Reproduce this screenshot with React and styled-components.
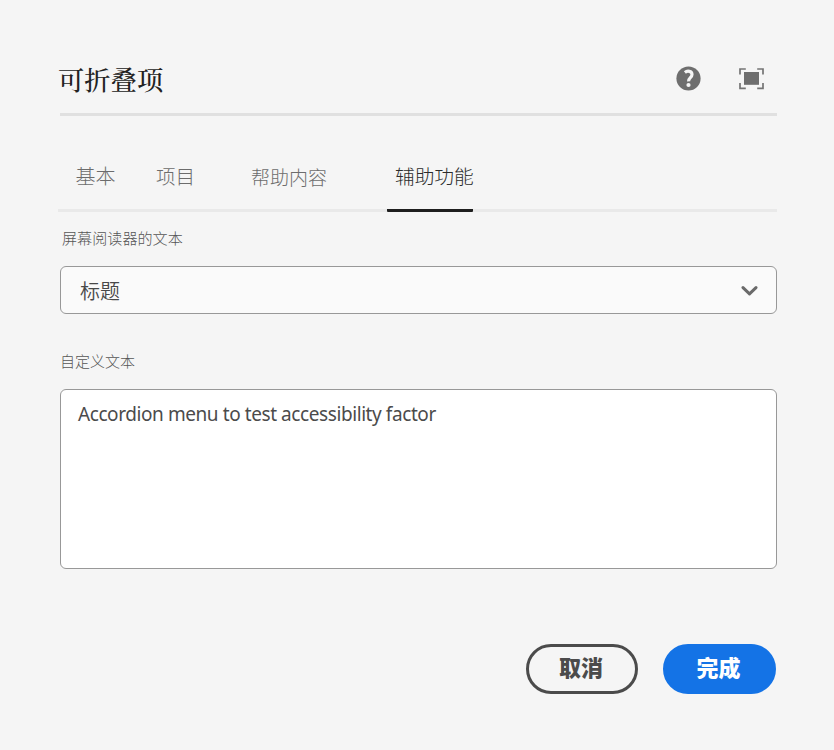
import React from 'react';
import styled, { createGlobalStyle } from 'styled-components';

const GlobalStyle = createGlobalStyle`
  * { box-sizing: border-box; }
  body {
    margin: 0;
    background: #f5f5f5;
    font-family: "Noto Sans CJK SC", sans-serif;
  }
`;

const Dialog = styled.main`
  width: 834px;
  height: 750px;
  padding: 50px 57px 0 60px;
  background: #f5f5f5;
  overflow: hidden;
`;

const Header = styled.header`
  display: flex;
  align-items: center;
  height: 66px;
  padding-right: 12px;
  padding-bottom: 6px;
  border-bottom: 3px solid #e0e0e0;
`;

const Title = styled.h1`
  flex: 1;
  margin: 0 0 0 -2px;
  font-family: "Noto Serif CJK SC", "Noto Sans CJK SC", serif;
  font-size: 26.3px;
  line-height: 40px;
  font-weight: 500;
  color: #222;
`;

const HeaderIcons = styled.div`
  display: flex;
  align-items: center;
  gap: 37px;
  svg { display: block; }
`;

const Tabs = styled.nav`
  display: flex;
  align-items: flex-end;
  height: 96px;
  margin-left: -2px;
  box-shadow: inset 0 -3px #e9e9e9;
`;

const Tab = styled.button`
  width: ${(p) => p.$width}px;
  height: 58px;
  margin-left: ${(p) => p.$gap}px;
  padding: 0 0 ${(p) => p.$lift}px ${(p) => (p.$active ? 8 : 0)}px;
  border: 0;
  border-bottom: 3px solid ${(p) => (p.$active ? '#1e1e1e' : 'transparent')};
  border-radius: 1px;
  background: none;
  font-family: inherit;
  font-size: ${(p) => p.$size}px;
  font-weight: 300;
  line-height: 28px;
  text-align: left;
  white-space: nowrap;
  color: ${(p) => (p.$active ? '#2c2c2c' : '#6c6c6c')};
`;

const Label = styled.label`
  display: block;
  height: 22px;
  margin: ${(p) => p.$top}px 0 ${(p) => p.$bottom}px ${(p) => p.$indent}px;
  font-size: ${(p) => p.$size}px;
  line-height: 22px;
  font-weight: 300;
  color: #555;
`;

const Select = styled.div`
  display: flex;
  align-items: center;
  justify-content: space-between;
  height: 48px;
  padding: 1px 18px 0 19px;
  border: 1px solid #989898;
  border-radius: 6px;
  background: #fafafa;
  font-size: 20px;
  line-height: 28px;
  font-weight: 350;
  color: #484848;
`;

const TextArea = styled.textarea`
  display: block;
  width: 100%;
  height: 180px;
  padding: 10px 17px;
  border: 1px solid #989898;
  border-radius: 6px;
  outline: 0;
  resize: none;
  background: #fff;
  font-family: "Noto Sans", sans-serif;
  font-size: 19px;
  line-height: 28px;
  letter-spacing: -0.42px;
  color: #4b4b4b;
`;

const Footer = styled.footer`
  display: flex;
  justify-content: flex-end;
  gap: 25px;
  margin-top: 75px;
  padding-right: 1px;
`;

const Button = styled.button`
  width: ${(p) => (p.$primary ? 113 : 112)}px;
  height: 50px;
  padding: 0 2px 6px 0;
  border: 3px solid ${(p) => (p.$primary ? '#1473e6' : '#4b4b4b')};
  border-radius: 25px;
  background: ${(p) => (p.$primary ? '#1473e6' : 'transparent')};
  color: ${(p) => (p.$primary ? '#fff' : '#4b4b4b')};
  font-family: inherit;
  font-size: 22px;
  line-height: 30px;
  font-weight: 900;
`;

const HelpIcon = () => (
  <svg width="26" height="26" viewBox="0 0 26 26" aria-label="帮助">
    <circle cx="12.5" cy="12.5" r="12.1" fill="#6e6e6e" />
    <path d="M8.9 6.4C11.2 4.5 16 4.8 16 8.6C16 11.8 12.4 11.6 12.6 15.4" fill="none" stroke="#f5f5f5" strokeWidth="3.2" />
    <circle cx="12.5" cy="19" r="2.1" fill="#f5f5f5" />
  </svg>
);

const FullscreenIcon = () => (
  <svg width="26" height="22" viewBox="0 0 26 22" aria-label="全屏">
    <path d="M1 6.5V1H6.8M18.2 1H24V6.5M1 15V20.4H6.8M18.2 20.4H24V15" fill="none" stroke="#747474" strokeWidth="1.7" />
    <rect x="5" y="4" width="15" height="12.8" fill="#6e6e6e" />
  </svg>
);

const Chevron = () => (
  <svg width="17" height="12" viewBox="0 0 17 12">
    <path d="M2 2.6L8.5 8.9L15 2.6" fill="none" stroke="#6a6a6a" strokeWidth="3" strokeLinecap="round" strokeLinejoin="round" />
  </svg>
);

const tabs = [
  { text: '基本', gap: 17.5, width: 40, size: 20, lift: 11 },
  { text: '项目', gap: 40.5, width: 40, size: 19.5, lift: 11 },
  { text: '帮助内容', gap: 55, width: 77, size: 19, lift: 9 },
  { text: '辅助功能', gap: 59, width: 86, size: 19.7, lift: 11, active: true },
];

export default function App() {
  return (
    <>
      <GlobalStyle />
      <Dialog>
        <Header>
          <Title>可折叠项</Title>
          <HeaderIcons>
            <HelpIcon />
            <FullscreenIcon />
          </HeaderIcons>
        </Header>
        <Tabs>
          {tabs.map((t) => (
            <Tab key={t.text} $gap={t.gap} $width={t.width} $size={t.size} $lift={t.lift} $active={t.active}>
              {t.text}
            </Tab>
          ))}
        </Tabs>
        <Label $top={14} $bottom={18} $indent={2} $size={15.1}>屏幕阅读器的文本</Label>
        <Select>
          标题
          <Chevron />
        </Select>
        <Label $top={36} $bottom={17} $indent={0} $size={15}>自定义文本</Label>
        <TextArea defaultValue="Accordion menu to test accessibility factor" spellCheck={false} />
        <Footer>
          <Button>取消</Button>
          <Button $primary>完成</Button>
        </Footer>
      </Dialog>
    </>
  );
}
